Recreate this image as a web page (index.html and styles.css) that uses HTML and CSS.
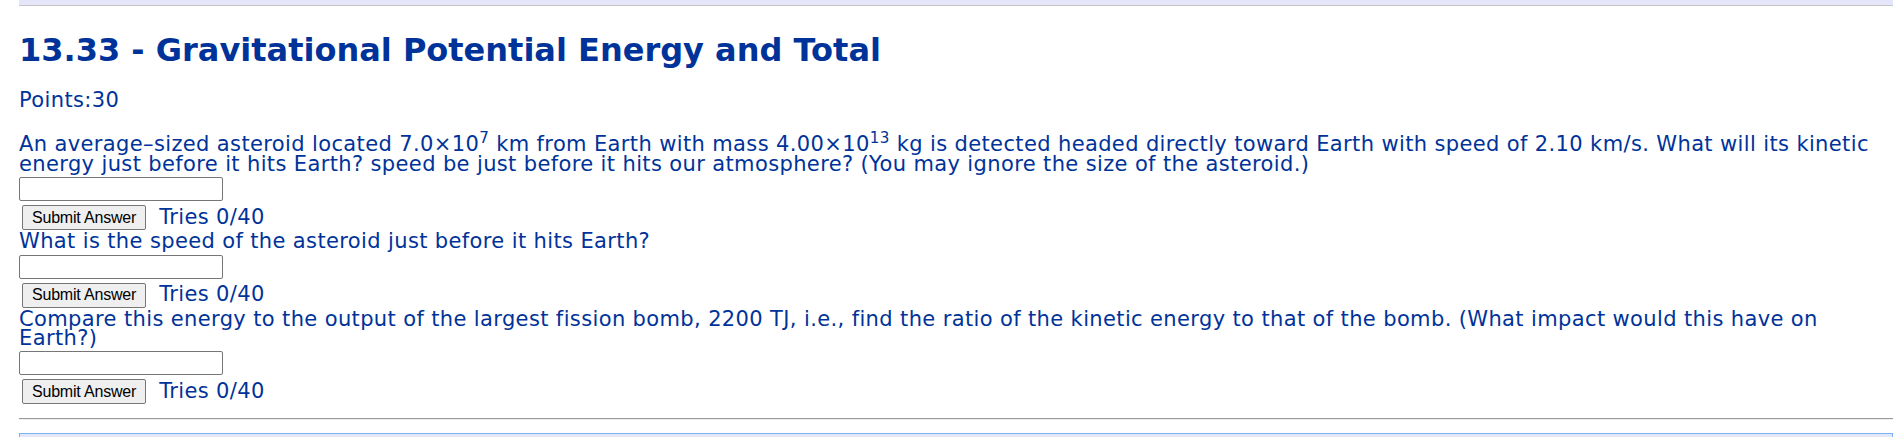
FILE: index.html
```html
<!DOCTYPE html>
<html>
<head>
<meta charset="utf-8">
<link rel="stylesheet" href="styles.css">
</head>
<body>
<div class="topbar"></div>
<div class="content">
  <h1 class="title">13.33 - Gravitational Potential Energy and Total</h1>
  <div class="points">Points:30</div>

  <div class="question first">
    <div class="qtext">An average–sized asteroid located 7.0×10<sup>7</sup> km from Earth with mass 4.00×10<sup>13</sup> kg is detected headed directly toward Earth with speed of 2.10 km/s. What will its kinetic energy just before it hits Earth? speed be just before it hits our atmosphere? (You may ignore the size of the asteroid.)</div>
    <input class="answer" type="text">
    <div class="row"><button class="submit" type="button">Submit Answer</button><span class="tries">Tries 0/40</span></div>
  </div>

  <div class="question">
    <div class="qtext">What is the speed of the asteroid just before it hits Earth?</div>
    <input class="answer" type="text">
    <div class="row"><button class="submit" type="button">Submit Answer</button><span class="tries">Tries 0/40</span></div>
  </div>

  <div class="question">
    <div class="qtext">Compare this energy to the output of the largest fission bomb, 2200 TJ, i.e., find the ratio of the kinetic energy to that of the bomb. (What impact would this have on Earth?)</div>
    <input class="answer" type="text">
    <div class="row"><button class="submit" type="button">Submit Answer</button><span class="tries">Tries 0/40</span></div>
  </div>

  <hr class="divider">
  <div class="bottombox"></div>
</div>
</body>
</html>
```
FILE: styles.css
```css
html, body {
  margin: 0;
  padding: 0;
  background: #ffffff;
}
body {
  font-family: "DejaVu Sans", Verdana, sans-serif;
  color: #003399;
}
.topbar {
  margin-left: 19px;
  height: 5px;
  background: #e6e6fa;
  border-bottom: 1px solid #c4c4c8;
}
.content {
  margin-left: 19px;
}
.title {
  margin: 26px 0 0 0;
  font-size: 32px;
  line-height: 37px;
  font-weight: bold;
  color: #003399;
}
.points {
  margin-top: 22px;
  font-size: 21px;
  line-height: 19.4px;
  letter-spacing: 0.37px;
}
.question {
  font-size: 21px;
  line-height: 19.4px;
  letter-spacing: 0.37px;
}
.question.first {
  margin-top: 25px;
}
.qtext sup {
  font-size: 0.72em;
  line-height: 0;
  vertical-align: 0.5em;
}
.answer {
  display: block;
  box-sizing: border-box;
  width: 204px;
  height: 24px;
  margin: 3px 0 0 0;
  padding: 1px 2px;
  border: 1px solid #767676;
  border-radius: 2px;
  background: #ffffff;
  font-size: 14px;
}
.row {
  display: flex;
  align-items: center;
  padding: 4px 0 2px 0;
}
.submit {
  box-sizing: border-box;
  height: 25px;
  margin: 0 0 0 3px;
  padding: 0 9px;
  border: 1px solid #767676;
  border-radius: 2px;
  background: #efefef;
  color: #000000;
  font-family: "Liberation Sans", Arial, sans-serif;
  font-size: 16px;
  letter-spacing: -0.2px;
}
.tries {
  margin-left: 13px;
  line-height: 19.4px;
}
.divider {
  margin: 12px 0 0 0;
  border: 0;
  border-top: 1px solid #9a9a9a;
  border-bottom: 1px solid #eeeeee;
  height: 0;
}
.bottombox {
  margin-top: 13px;
  height: 3px;
  background: #e6e6fa;
  border: 1px solid #74b4f4;
  border-bottom: 0;
}
```
